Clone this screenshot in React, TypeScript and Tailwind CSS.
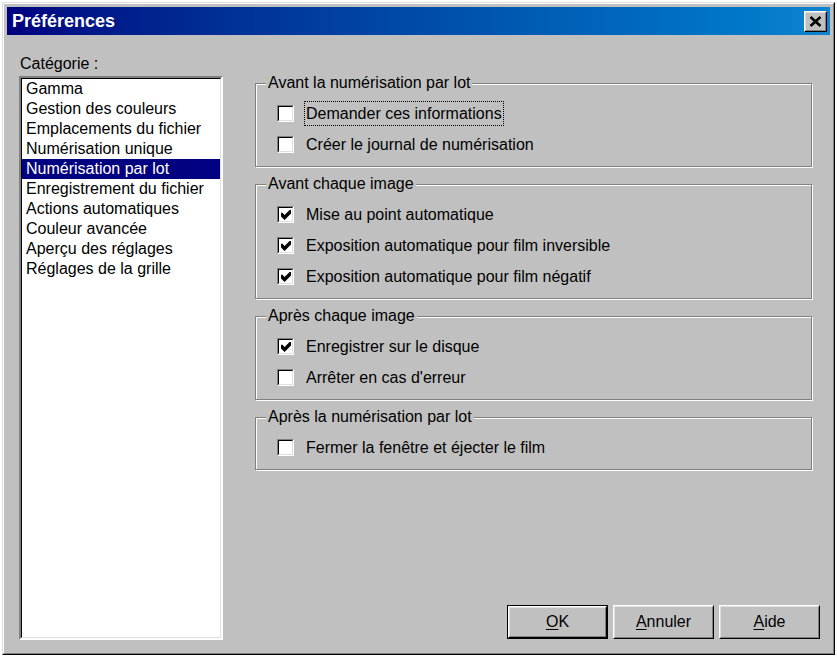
import React from "react";

const categories = [
  "Gamma",
  "Gestion des couleurs",
  "Emplacements du fichier",
  "Numérisation unique",
  "Numérisation par lot",
  "Enregistrement du fichier",
  "Actions automatiques",
  "Couleur avancée",
  "Aperçu des réglages",
  "Réglages de la grille",
];

type Option = { label: string; checked: boolean; focused?: boolean };

const groups: { title: string; options: Option[] }[] = [
  {
    title: "Avant la numérisation par lot",
    options: [
      { label: "Demander ces informations", checked: false, focused: true },
      { label: "Créer le journal de numérisation", checked: false },
    ],
  },
  {
    title: "Avant chaque image",
    options: [
      { label: "Mise au point automatique", checked: true },
      { label: "Exposition automatique pour film inversible", checked: true },
      { label: "Exposition automatique pour film négatif", checked: true },
    ],
  },
  {
    title: "Après chaque image",
    options: [
      { label: "Enregistrer sur le disque", checked: true },
      { label: "Arrêter en cas d'erreur", checked: false },
    ],
  },
  {
    title: "Après la numérisation par lot",
    options: [{ label: "Fermer la fenêtre et éjecter le film", checked: false }],
  },
];

const CheckBox = ({ checked }: { checked: boolean }) => (
  <div className="w-[17px] h-[17px] shrink-0 border border-t-[#808080] border-l-[#808080] border-r-white border-b-white">
    <div className="w-full h-full flex items-center justify-center bg-white border border-t-black border-l-black border-r-[#dfdfdf] border-b-[#dfdfdf]">
      {checked && (
        <svg width="10" height="10" viewBox="0 0 7 7">
          <polygon points="0,2 1,2 2.5,3.5 6,0 7,0 7,2.5 2.5,7 0,4.5" fill="#000" />
        </svg>
      )}
    </div>
  </div>
);

const GroupBox = ({ title, options }: { title: string; options: Option[] }) => (
  <div className="relative w-[557px] border border-[#808080] shadow-[inset_1px_1px_0_#fff,1px_1px_0_#fff] pt-[14px] pb-[6px] pl-[21px]">
    <span className="absolute -top-[10px] left-[10px] px-[2px] leading-[18px] bg-[#c0c0c0]">
      {title}
    </span>
    {options.map((o) => (
      <div key={o.label} className="h-[31px] flex items-center">
        <CheckBox checked={o.checked} />
        <span
          className={`ml-[10px] px-[1px] py-[2px] leading-[19px] border border-dotted ${
            o.focused ? "border-black" : "border-transparent"
          }`}
        >
          {o.label}
        </span>
      </div>
    ))}
  </div>
);

const Button = ({ label, isDefault }: { label: string; isDefault?: boolean }) => (
  <button
    className={`w-[101px] h-[34px] ${isDefault ? "border border-black" : ""}`}
  >
    <div className="w-full h-full border border-t-white border-l-white border-r-black border-b-black">
      <div className="w-full h-full flex items-center justify-center border border-t-[#dfdfdf] border-l-[#dfdfdf] border-r-[#808080] border-b-[#808080]">
        <span>
          <u className="underline-offset-2">{label[0]}</u>
          {label.slice(1)}
        </span>
      </div>
    </div>
  </button>
);

export default function App() {
  return (
    <div className="w-[837px] h-[656px] bg-white pl-[2px] pt-[2px] font-['Liberation_Sans',Arial,sans-serif] text-[16px] text-black">
      <div className="w-[833px] h-[653px] border border-t-[#dfdfdf] border-l-[#dfdfdf] border-r-black border-b-black">
        <div className="h-full flex flex-col bg-[#c0c0c0] p-[3px] border border-t-white border-l-white border-r-[#808080] border-b-[#808080]">
          {/* title bar */}
          <div className="h-[28px] shrink-0 flex items-center justify-between pl-[5px] pr-[3px] bg-linear-to-r from-[#000080] to-[#1084d0]">
            <span className="text-white font-bold text-[18px] leading-none">Préférences</span>
            <div className="w-[23px] h-[21px] mt-[1px] border border-t-white border-l-white border-r-black border-b-black">
              <div className="w-full h-full flex items-center justify-center bg-[#c0c0c0] border border-t-[#dfdfdf] border-l-[#dfdfdf] border-r-[#808080] border-b-[#808080]">
                <svg width="13" height="11" viewBox="0 0 13 11">
                  <path d="M1.5 1 L11.5 10 M11.5 1 L1.5 10" stroke="#000" strokeWidth="2.6" />
                </svg>
              </div>
            </div>
          </div>

          <div className="flex-1 flex">
            {/* category list */}
            <div className="ml-[12px] w-[204px] pt-[20px]">
              <div className="pl-[1px] leading-[18px]">Catégorie :</div>
              <div className="mt-[3px] h-[564px] border-2 border-t-[#808080] border-l-[#808080] border-r-white border-b-white">
                <div className="h-full bg-white border border-t-black border-l-black border-r-[#dfdfdf] border-b-[#dfdfdf]">
                  {categories.map((c) => (
                    <div
                      key={c}
                      className={`h-[20px] leading-[20px] pl-[4px] whitespace-nowrap ${
                        c === "Numérisation par lot" ? "bg-[#000080] text-white" : ""
                      }`}
                    >
                      {c}
                    </div>
                  ))}
                </div>
              </div>
            </div>

            {/* options */}
            <div className="ml-[32px] flex-1 flex flex-col pt-[48px] pb-[11px] pr-[9px]">
              <div className="flex flex-col gap-[17px]">
                {groups.map((g) => (
                  <GroupBox key={g.title} title={g.title} options={g.options} />
                ))}
              </div>
              <div className="flex-1" />
              <div className="flex justify-end gap-[5px] pr-[1px]">
                <Button label="OK" isDefault />
                <Button label="Annuler" />
                <Button label="Aide" />
              </div>
            </div>
          </div>
        </div>
      </div>
    </div>
  );
}
